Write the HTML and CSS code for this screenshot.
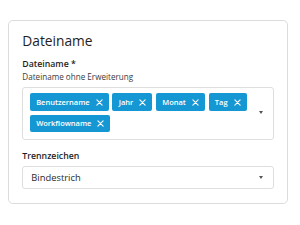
FILE: index.html
```html
<!DOCTYPE html>
<html lang="de">
<head>
<meta charset="utf-8">
<title>Dateiname</title>
<link rel="stylesheet" href="styles.css">
</head>
<body>
<section class="card">
  <h2 class="title">Dateiname</h2>
  <div class="field">
    <div class="label">Dateiname *</div>
    <div class="hint">Dateiname ohne Erweiterung</div>
    <div class="multi">
      <div class="chips">
        <span class="chip">Benutzername<svg class="x" viewBox="0 0 8 8"><path d="M1 1L7 7M7 1L1 7"/></svg></span>
        <span class="chip">Jahr<svg class="x" viewBox="0 0 8 8"><path d="M1 1L7 7M7 1L1 7"/></svg></span>
        <span class="chip">Monat<svg class="x" viewBox="0 0 8 8"><path d="M1 1L7 7M7 1L1 7"/></svg></span>
        <span class="chip">Tag<svg class="x" viewBox="0 0 8 8"><path d="M1 1L7 7M7 1L1 7"/></svg></span>
        <span class="chip">Workflowname<svg class="x" viewBox="0 0 8 8"><path d="M1 1L7 7M7 1L1 7"/></svg></span>
      </div>
      <span class="caret"></span>
    </div>
  </div>
  <div class="field field-sep">
    <div class="label">Trennzeichen</div>
    <div class="select">
      <span class="value">Bindestrich</span>
      <span class="caret"></span>
    </div>
  </div>
</section>
</body>
</html>
```
FILE: styles.css
```css
html, body {
  margin: 0;
  padding: 0;
  background: #ffffff;
}
body {
  padding: 20px 12.5px 0 8px;
  font-family: "Open Sans", "Noto Sans", sans-serif;
  color: #222222;
}
.card {
  box-sizing: border-box;
  width: 279.5px;
  border: 1px solid #dcdcdc;
  border-radius: 5px;
  padding: 10px 13px 13.5px 13.3px;
}
.title {
  margin: 0 0 8px 0;
  font-size: 13.75px;
  line-height: 19px;
  font-weight: 400;
  color: #1e1e1e;
}
.label {
  font-size: 8.75px;
  line-height: 12.5px;
  font-weight: 600;
  color: #1e1e1e;
}
.hint {
  font-size: 8.125px;
  line-height: 12px;
  color: #3a3a3a;
  margin-bottom: 4px;
}
.multi {
  display: flex;
  align-items: center;
  border: 1px solid #dedede;
  border-radius: 3px;
  padding: 5.8px 10px 7px 6.6px;
  min-height: 39px;
}
.chips {
  flex: 1;
  display: flex;
  flex-wrap: wrap;
  gap: 3.75px;
}
.chip {
  display: inline-flex;
  align-items: center;
  height: 17.5px;
  padding: 0 6px 0 6.25px;
  background: #1597d3;
  color: #ffffff;
  border-radius: 2px;
  font-size: 7.5px;
  font-weight: 600;
  white-space: nowrap;
}
.x {
  width: 7px;
  height: 7px;
  margin-left: 6px;
  fill: none;
  stroke: #ffffff;
  stroke-width: 1.3;
  stroke-linecap: round;
}
.caret {
  width: 0;
  height: 0;
  border-left: 2.5px solid transparent;
  border-right: 2.5px solid transparent;
  border-top: 3px solid #555555;
  margin-left: 6px;
}
.field-sep {
  margin-top: 10px;
}
.field-sep .label {
  margin-bottom: 3.5px;
}
.select {
  box-sizing: border-box;
  height: 23px;
  display: flex;
  align-items: center;
  border: 1px solid #dedede;
  border-radius: 3px;
  padding: 0 10px 0 8px;
}
.value {
  flex: 1;
  font-size: 9.375px;
  color: #2a2a2a;
}
```
